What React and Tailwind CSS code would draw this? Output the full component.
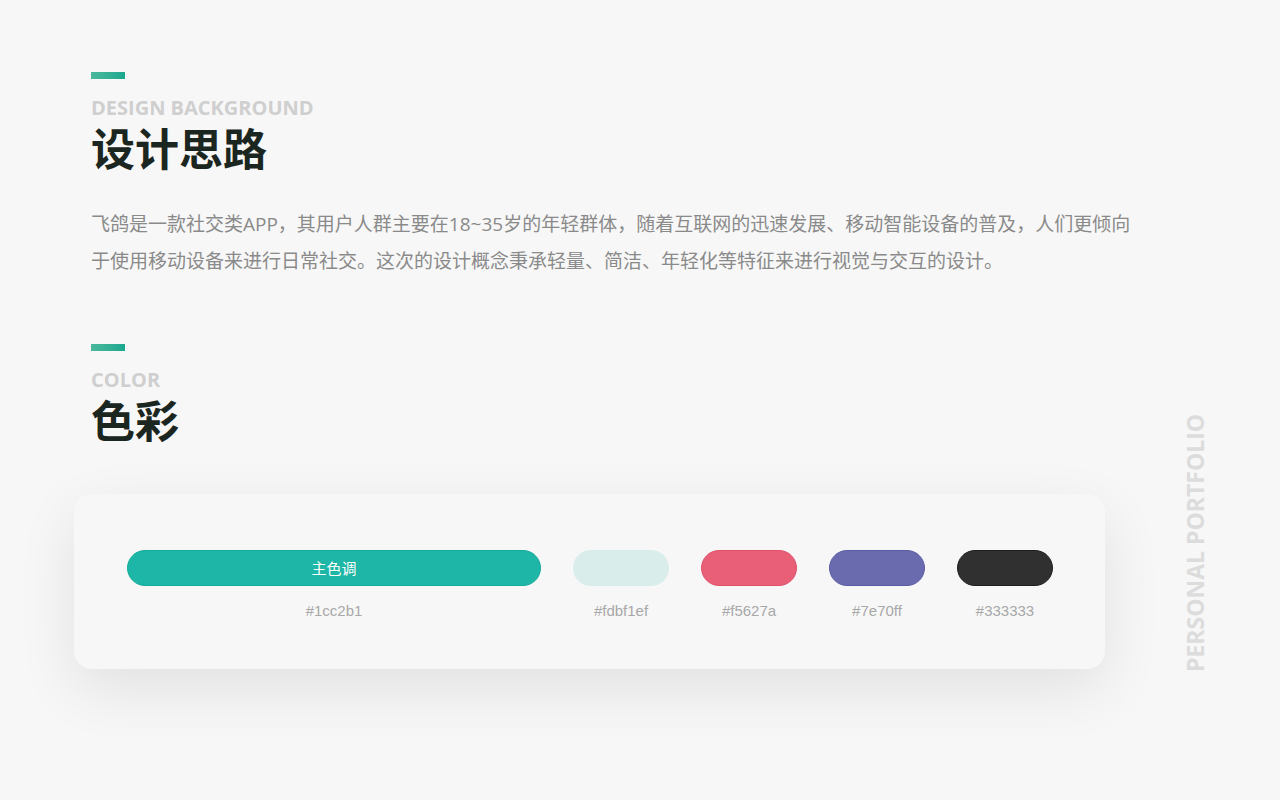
import React from 'react';

const font = { fontFamily: '"Open Sans", "Noto Sans CJK SC", sans-serif' };
const hexFont = { fontFamily: '"Liberation Sans", "Noto Sans CJK SC", sans-serif' };

const swatches = [
  { color: 'bg-[#e85f77]', border: 'border-[#e0506a]', label: '#f5627a' },
  { color: 'bg-[#6a6aae]', border: 'border-[#5c5ca6]', label: '#7e70ff' },
  { color: 'bg-[#2f302f]', border: 'border-[#1e1e1e]', label: '#333333' },
];

const Heading = ({ en, zh }) => (
  <div>
    <div className="w-[34px] h-[7px] bg-gradient-to-r from-[#4ab79b] to-[#16a88e]" />
    <div className="mt-[17px] text-[20px] leading-[24px] font-bold text-[#cfcfcf]">{en}</div>
    <div className="mt-[2px] text-[44px] leading-[54px] font-bold text-[#1c2620]">{zh}</div>
  </div>
);

export default function App() {
  return (
    <div className="relative w-[1280px] h-[800px] bg-[#f7f7f7] overflow-hidden" style={font}>
      <div className="pl-[91px] pt-[72px]">
        <Heading en="DESIGN BACKGROUND" zh="设计思路" />
        <p className="mt-[30px] w-[1045px] text-[19px] leading-[37px] text-[#8a8a8a]">
          飞鸽是一款社交类APP，其用户人群主要在18~35岁的年轻群体，随着互联网的迅速发展、移动智能设备的普及，人们更倾向于使用移动设备来进行日常社交。这次的设计概念秉承轻量、简洁、年轻化等特征来进行视觉与交互的设计。
        </p>
        <div className="mt-[64px]">
          <Heading en="COLOR" zh="色彩" />
        </div>
      </div>
      <div className="ml-[74px] mt-[46px] w-[1031px] h-[175px] rounded-[18px] bg-[#f7f7f7] shadow-[0_20px_60px_rgba(0,0,0,0.09)] pl-[53px] pt-[56px] flex gap-[32px]">
        <div className="flex flex-col items-center">
          <div className="w-[414px] h-[36px] rounded-full bg-[#1eb6a6] border border-[#15ab9a] flex items-center justify-center text-white text-[15px]">主色调</div>
          <div className="mt-[14px] text-[15px] text-[#a8a8a8]" style={hexFont}>#1cc2b1</div>
        </div>
        <div className="flex flex-col items-center">
          <div className="w-[96px] h-[36px] rounded-full bg-[#d9edeb]" />
          <div className="mt-[14px] text-[15px] text-[#a8a8a8]" style={hexFont}>#fdbf1ef</div>
        </div>
        {swatches.map((s) => (
          <div key={s.label} className="flex flex-col items-center">
            <div className={`w-[96px] h-[36px] rounded-full border ${s.color} ${s.border}`} />
            <div className="mt-[14px] text-[15px] text-[#a8a8a8]" style={hexFont}>{s.label}</div>
          </div>
        ))}
      </div>
      <div className="absolute left-[1178px] top-[408px] h-[264px] flex items-center [writing-mode:vertical-rl] rotate-180 text-[23px] font-bold text-[#dcdcdc]">
        PERSONAL PORTFOLIO
      </div>
    </div>
  );
}
